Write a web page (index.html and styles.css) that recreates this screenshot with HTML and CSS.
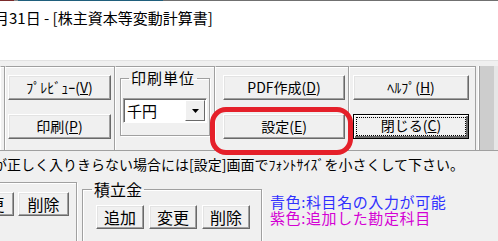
FILE: index.html
```html
<!DOCTYPE html>
<html lang="ja">
<head>
    <meta charset="UTF-8">
    <title>株主資本等変動計算書</title>
    <link rel="stylesheet" href="styles.css">
</head>
<body>
    <div class="topline"></div>
    <div class="title">月31日 - [株主資本等変動計算書]</div>

    <div class="toolbar">
        <div class="panel edge"></div>
        <div class="panel col-print">
            <button class="btn">ﾌﾟﾚﾋﾞｭｰ(<u>V</u>)</button>
            <button class="btn">印刷(<u>P</u>)</button>
        </div>
        <div class="panel col-unit">
            <fieldset class="group unit">
                <legend>印刷単位</legend>
                <div class="select">
                    <span class="select-value">千円</span>
                    <span class="select-drop">
                        <svg width="7" height="4" viewBox="0 0 7 4"><path d="M0 0h7L3.5 4z" fill="#000"/></svg>
                    </span>
                </div>
            </fieldset>
        </div>
        <div class="panel col-pdf">
            <button class="btn">PDF作成(<u>D</u>)</button>
            <button class="btn">設定(<u>E</u>)</button>
        </div>
        <div class="panel col-help">
            <button class="btn">ﾍﾙﾌﾟ(<u>H</u>)</button>
            <button class="btn default"><span class="focus">閉じる(<u>C</u>)</span></button>
        </div>
        <div class="scroll-strip"></div>
    </div>

    <p class="notice">が正しく入りきらない場合には[設定]画面でﾌｫﾝﾄｻｲｽﾞを小さくして下さい。</p>

    <div class="lower">
        <fieldset class="group left-group">
            <button class="btn small cut">変更</button>
            <button class="btn small">削除</button>
        </fieldset>
        <fieldset class="group reserve">
            <legend>積立金</legend>
            <button class="btn small">追加</button>
            <button class="btn small">変更</button>
            <button class="btn small">削除</button>
        </fieldset>
        <div class="legend">
            <div class="blue">青色:科目名の入力が可能</div>
            <div class="purple">紫色:追加した勘定科目</div>
        </div>
    </div>

    <!-- red annotation around the settings button -->
    <div class="highlight"></div>
</body>
</html>
```

FILE: styles.css
```css
* {
    box-sizing: border-box;
}
body {
    margin: 0;
    width: 498px;
    height: 241px;
    overflow: hidden;
    position: relative;
    background: #fff;
    color: #000;
    font-family: "Noto Sans CJK JP", "Noto Sans", sans-serif;
}
.topline {
    height: 1px;
    background: linear-gradient(to right, #7b2b2b 0 14px, #8a8a8a 14px 18px, #1f5f7c 18px 163px, #707070 163px);
}
.title {
    height: 59px;
    margin-left: -6px;
    padding-top: 7px;
    font-size: 15px;
    line-height: 20px;
    white-space: nowrap;
}
.toolbar {
    display: flex;
    height: 91px;
    padding-top: 5px;
    background: #f0f0f0;
    border-top: 1px solid #e2e2e2;
    border-bottom: 1px solid #a0a0a0;
}
.panel {
    display: flex;
    flex-direction: column;
    gap: 14px;
    padding-top: 8px;
    border-top: 1px solid #a0a0a0;
    border-left: 1px solid #fff;
    border-right: 1px solid #a0a0a0;
    box-shadow: inset 0 1px 0 #fff;
}
.edge {
    width: 5px;
}
.col-print {
    width: 110px;
    padding-left: 2px;
}
.col-print .btn {
    width: 103px;
}
.col-unit {
    width: 100px;
    padding: 0 0 6px 4px;
}
.col-pdf {
    width: 134px;
    padding-left: 7px;
}
.col-pdf .btn {
    width: 122px;
}
.col-help {
    width: 127px;
    padding-left: 3px;
}
.col-help .btn {
    width: 116px;
}
.scroll-strip {
    flex: 1;
    margin-left: 2px;
    border-left: 1px solid #fff;
    border-right: 4px solid #e6e6e6;
    background: #cdcdcd;
    box-shadow: inset 1px 0 0 #a0a0a0;
}
.btn {
    height: 25px;
    padding: 0;
    font-family: inherit;
    font-size: 14px;
    line-height: 21px;
    color: #000;
    background: #f0f0f0;
    border: 1px solid;
    border-color: #fff #696969 #696969 #fff;
    box-shadow: inset -1px -1px 0 #a0a0a0, inset 1px 1px 0 #e3e3e3;
}
.btn u {
    text-underline-offset: 1px;
}
.btn.default {
    border: 1px solid #000;
    box-shadow: inset 1px 1px 0 #fff, inset -2px -2px 0 #696969;
    padding: 3px;
}
.focus {
    display: block;
    height: 100%;
    line-height: 15px;
    outline: 1px dotted #000;
}
.group {
    margin: 0;
    padding: 0;
    border: 1px solid #a0a0a0;
    box-shadow: 1px 1px 0 #fff, inset 1px 1px 0 #fff;
}
.group legend {
    padding: 0 2px;
    margin-left: 6px;
    line-height: 16px;
}
.unit {
    width: 90px;
    height: 66px;
    margin-top: 3px;
    padding: 12px 0 0 2px;
}
.unit legend {
    font-size: 15px;
    letter-spacing: 1px;
}
.select {
    display: flex;
    width: 84px;
    height: 25px;
    background: #fff;
    border: 1px solid;
    border-color: #a0a0a0 #fff #fff #a0a0a0;
    box-shadow: inset 1px 1px 0 #696969;
}
.select-value {
    flex: 1;
    padding: 1px 0 0 3px;
    font-size: 15px;
    line-height: 21px;
}
.select-drop {
    display: flex;
    align-items: center;
    justify-content: center;
    width: 20px;
    margin: 1px 1px 1px 0;
    background: #f0f0f0;
    border: 1px solid;
    border-color: #fff #696969 #696969 #fff;
}
.notice {
    margin: 0;
    height: 22px;
    padding-top: 4px;
    background: #f0f0f0;
    font-size: 14px;
    line-height: 18px;
    white-space: nowrap;
    text-indent: -7px;
}
.lower {
    display: flex;
    height: 69px;
    padding-top: 9px;
    background: #f0f0f0;
}
.lower .group {
    display: flex;
    gap: 4px;
    height: 70px;
    padding-top: 9px;
}
.lower .group legend {
    font-size: 16px;
    line-height: 14px;
}
.left-group {
    width: 82px;
    margin-left: -5px;
    padding-left: 0;
}
.btn.small {
    width: 51px;
    height: 24px;
    font-size: 16px;
    line-height: 20px;
}
.btn.cut {
    margin-left: -33px;
}
.reserve {
    width: 180px;
    margin-left: 5px;
    padding-left: 13px;
}
.reserve legend {
    margin-left: -4px;
}
.reserve .btn.small {
    width: 48px;
    margin-right: 1px;
}
.legend {
    padding: 12px 0 0 8px;
    font-size: 15px;
    line-height: 16px;
    letter-spacing: 0.6px;
}
.blue {
    color: #3030ff;
}
.purple {
    color: #d400d4;
}
.highlight {
    position: absolute;
    left: 210px;
    top: 107px;
    width: 143px;
    height: 48px;
    border: 5px solid #e5202a;
    border-radius: 16px;
}
```
